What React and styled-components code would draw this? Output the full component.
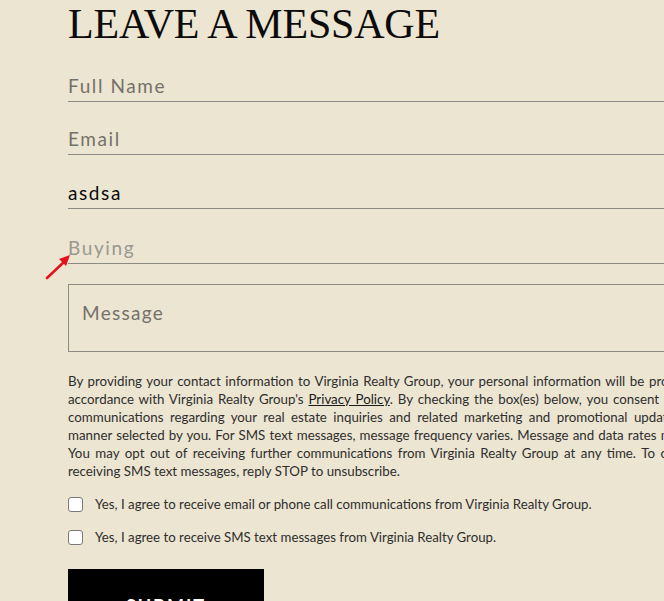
import React from "react";
import styled, { createGlobalStyle } from "styled-components";

const Global = createGlobalStyle`
  html, body { margin: 0; padding: 0; background: #ece5d1; overflow: hidden; }
  body { font-family: Lato, "Open Sans", sans-serif; }
`;

const Page = styled.div`
  position: relative;
  width: 664px;
  height: 601px;
  overflow: hidden;
`;

const Form = styled.form`
  width: 655px;
  margin-left: 68px;
  display: flex;
  flex-direction: column;
`;

const Heading = styled.h2`
  font-family: "Liberation Serif", "Times New Roman", serif;
  font-weight: 400;
  font-size: 42px;
  line-height: 46px;
  margin: 1px 0 17px;
  color: #0b0b0b;
  letter-spacing: -0.2px;
`;

const Field = styled.div`
  height: 38px;
  box-sizing: border-box;
  padding-bottom: 4px;
  border-bottom: 1px solid #8d8b86;
  display: flex;
  align-items: flex-end;
  line-height: 22px;
  margin-bottom: ${(p) => p.$gap}px;
  font-size: 19px;
  letter-spacing: 1.6px;
  color: ${(p) => p.$color || "#74716a"};
`;

const MessageBox = styled.div`
  height: 68px;
  border: 1px solid #8d8b86;
  padding: 16px 13px 0;
  box-sizing: border-box;
  font-size: 19px;
  letter-spacing: 1.3px;
  color: #74716a;
  margin-bottom: 20px;
`;

const Legal = styled.p`
  margin: 0 0 16px;
  font-size: 13.3px;
  line-height: 18px;
  color: #2e2e2e;
  a { color: #1a1a1a; text-decoration: underline; }
`;

const Line = styled.span`
  display: block;
  text-align: justify;
  text-align-last: ${(p) => (p.$last ? "left" : "justify")};
`;

const CheckRow = styled.label`
  display: flex;
  align-items: center;
  gap: 12px;
  font-size: 13.25px;
  color: #2e2e2e;
  margin-bottom: 17px;
  height: 16px;
`;

const Box = styled.span`
  width: 13px;
  height: 13px;
  border: 1px solid #7a7a7a;
  border-radius: 3px;
  background: #fff;
  flex: none;
`;

const Submit = styled.button`
  margin-top: 7px;
  width: 196px;
  height: 62px;
  background: #000;
  color: #fff;
  border: 0;
  font-family: Lato, sans-serif;
  font-weight: 700;
  font-size: 18px;
  letter-spacing: 2px;
  padding-top: 12px;
  text-align: center;
`;

const Arrow = styled.svg`
  position: absolute;
  left: 44px;
  top: 252px;
`;

export default function App() {
  return (
    <Page>
      <Global />
      <Form onSubmit={(e) => e.preventDefault()}>
        <Heading>LEAVE A MESSAGE</Heading>
        <Field $gap={15}>Full Name</Field>
        <Field $gap={16}>Email</Field>
        <Field $gap={17} $color="#0a0a0a">asdsa</Field>
        <Field $gap={20} $color="#9a9891">Buying</Field>
        <MessageBox>Message</MessageBox>
        <Legal>
          <Line>By providing your contact information to Virginia Realty Group, your personal information will be processed in</Line>
          <Line>accordance with Virginia Realty Group's <a>Privacy Policy</a>. By checking the box(es) below, you consent to receive</Line>
          <Line>communications regarding your real estate inquiries and related marketing and promotional updates in the</Line>
          <Line>manner selected by you. For SMS text messages, message frequency varies. Message and data rates may apply.</Line>
          <Line>You may opt out of receiving further communications from Virginia Realty Group at any time. To opt out of</Line>
          <Line $last>receiving SMS text messages, reply STOP to unsubscribe.</Line>
        </Legal>
        <CheckRow><Box />Yes, I agree to receive email or phone call communications from Virginia Realty Group.</CheckRow>
        <CheckRow><Box />Yes, I agree to receive SMS text messages from Virginia Realty Group.</CheckRow>
        <Submit type="submit">SUBMIT</Submit>
      </Form>
      <Arrow width="30" height="30" viewBox="0 0 30 30">
        <line x1="3" y1="26" x2="21" y2="9" stroke="#e0141a" strokeWidth="2.6" strokeLinecap="round" />
        <polygon points="26,3 15,7 22,14" fill="#e0141a" />
      </Arrow>
    </Page>
  );
}
